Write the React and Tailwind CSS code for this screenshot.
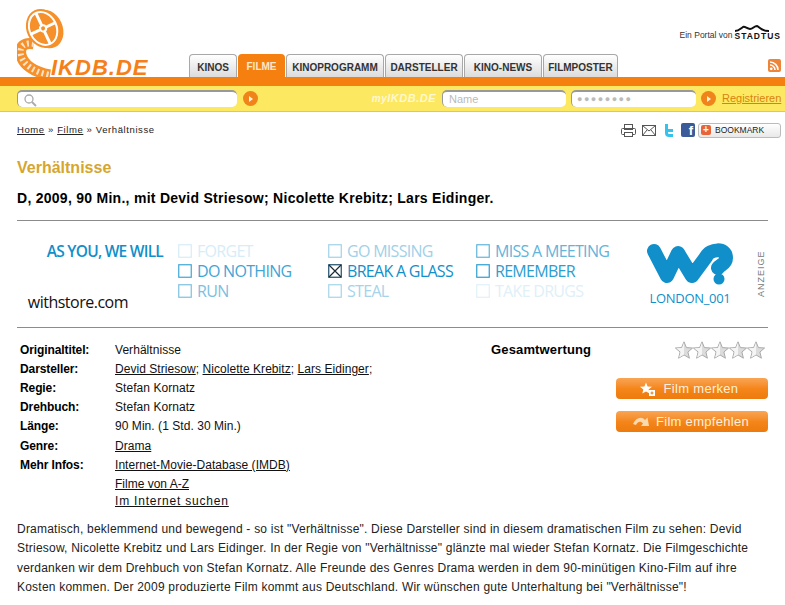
function Logo() {
  return (
    <svg width="64" height="76" viewBox="0 0 64 76" className="shrink-0">
      <path d="M17 43 C8 41 2 45 4 54 C6 63 16 71 33 74" fill="none" stroke="#f5902a" strokeWidth="11" />
      <path d="M17 43 C8 41 2 45 4 54 C6 63 16 71 33 74" fill="none" stroke="#fff" strokeWidth="6" strokeDasharray="2 3" opacity="0.75" />
      <g transform="translate(27 27) rotate(-25)">
        <ellipse cx="2" cy="2" rx="16" ry="20" fill="#f5902a" />
        <ellipse cx="-1" cy="0" rx="15.5" ry="19" fill="#fff" stroke="#f5902a" strokeWidth="2" />
        <ellipse cx="-1" cy="0" rx="12.5" ry="16" fill="#f5902a" />
        <path d="M-1 -17 L-1 17 M-15 0 L13 0" stroke="#fff" strokeWidth="3" />
        <circle cx="-1" cy="0" r="4" fill="#fff" />
        <circle cx="-1" cy="0" r="2" fill="#f5902a" />
      </g>
    </svg>
  )
}

function Tab({ label, w, active }) {
  if (active) {
    return (
      <div className={`${w} h-[23px] bg-[#f57f0f] rounded-t-[4px] text-[#fde9c8] text-[10px] font-bold flex items-center justify-center pt-px`}>
        {label}
      </div>
    )
  }
  return (
    <div className={`${w} h-[23px] border border-b-0 border-[#a8a8a8] bg-gradient-to-b from-white to-[#dcdcdc] rounded-t-[4px] text-[#333] text-[10px] font-bold flex items-center justify-center pt-[3px]`}>
      {label}
    </div>
  )
}

function GoButton() {
  return (
    <div className="w-[15px] h-[15px] rounded-full bg-[#f0831a] flex items-center justify-center shrink-0">
      <div className="w-0 h-0 border-y-[3.5px] border-y-transparent border-l-[4px] border-l-[#fff3d8] ml-[1px]" />
    </div>
  )
}

function Field({ w, children }) {
  return (
    <div className={`${w} h-[17px] bg-white rounded-[5px] border-t-2 border-l border-[#999] border-b-0 border-r-0 flex items-center pl-[5px] shrink-0`}>
      {children}
    </div>
  )
}

function Check({ checked, color }) {
  return (
    <svg width="14" height="14" viewBox="0 0 14 14" className="shrink-0">
      <rect x="0.75" y="0.75" width="12.5" height="12.5" fill="none" stroke={checked ? '#1c4a66' : color} strokeWidth="1.2" />
      {checked && <path d="M1 1 L13 13 M13 1 L1 13" stroke="#1c2a33" strokeWidth="1.2" />}
    </svg>
  )
}

function AdRow({ label, color, checked }) {
  return (
    <div className="h-[20px] flex items-center gap-[5px] text-[16px] tracking-[-0.7px] whitespace-nowrap font-['Open_Sans',sans-serif]" style={{ color }}>
      <Check color={color} checked={checked} />
      {label}
    </div>
  )
}

function Ad() {
  return (
    <div className="h-[106px] flex">
      <div className="w-[161px] shrink-0 flex flex-col items-end pt-[20px]">
        <div className="text-[#118fca] text-[15.5px] tracking-[-0.75px] font-semibold leading-[20px] font-['Open_Sans',sans-serif] mr-[15px] whitespace-nowrap">AS YOU, WE WILL</div>
        <div className="text-[#111] text-[16px] tracking-[-0.5px] leading-[20px] mt-[31px] mr-[50px] font-['Open_Sans',sans-serif] whitespace-nowrap">withstore.com</div>
      </div>
      <div className="w-[150px] shrink-0 pt-[20px]">
        <AdRow label="FORGET" color="#d6edf7" />
        <AdRow label="DO NOTHING" color="#3ea6d6" />
        <AdRow label="RUN" color="#7cc0e0" />
      </div>
      <div className="w-[147px] shrink-0 pt-[20px]">
        <AdRow label="GO MISSING" color="#9fd1e8" />
        <AdRow label="BREAK A GLASS" color="#118fca" checked />
        <AdRow label="STEAL" color="#a5d4ea" />
      </div>
      <div className="w-[171px] shrink-0 pt-[20px] pl-px">
        <AdRow label="MISS A MEETING" color="#62b4da" />
        <AdRow label="REMEMBER" color="#2b9dd0" />
        <AdRow label="TAKE DRUGS" color="#e0f0f8" />
      </div>
      <div className="w-[88px] shrink-0 flex flex-col items-center pt-[22px]">
        <svg width="88" height="42" viewBox="0 0 88 42">
          <path d="M8 8 L21 33 L32 10 L46 33 L60 14 C64 6 80 4 80 15 C80 21 74 22 72 25" fill="none" stroke="#118fca" strokeWidth="14" strokeLinecap="round" strokeLinejoin="round" />
          <circle cx="73" cy="36" r="5.5" fill="#118fca" />
        </svg>
        <div className="text-[#118fca] text-[13px] font-medium tracking-[-0.3px] mt-[4px] whitespace-nowrap font-['Open_Sans',sans-serif]">LONDON_001</div>
      </div>
      <div className="flex-1 flex items-center justify-end">
        <div className="text-[#777] text-[9px] tracking-[1px] -rotate-90 w-[12px] flex justify-center">ANZEIGE</div>
      </div>
    </div>
  )
}

function Star() {
  return (
    <svg width="18" height="18" viewBox="0 0 18 18">
      <path d="M9 0.8 L11.4 6.6 L17.6 7 L12.9 11 L14.4 17.2 L9 13.9 L3.6 17.2 L5.1 11 L0.4 7 L6.6 6.6 Z" fill="#dcdcdc" stroke="#aaa" strokeWidth="1" />
      <path d="M9 1.5 L9 13.6 L4.2 16.4 L5.6 10.8 L1.4 7.3 L7 6.9 Z" fill="#f5f5f5" />
    </svg>
  )
}

function OrangeButton({ label, icon, spacing }) {
  return (
    <div className={`w-[152px] h-[21px] rounded-[4px] bg-gradient-to-b from-[#f9a552] via-[#f5861a] to-[#ed7a0c] text-[#fdf0dc] text-[13px] tracking-[0.3px] flex items-center justify-center ${spacing}`}>
      {icon}
      <span>{label}</span>
    </div>
  )
}

const rows = [
  ['Originaltitel:', <span>Verhältnisse</span>],
  ['Darsteller:', <span><u>Devid Striesow</u>; <u>Nicolette Krebitz</u>; <u>Lars Eidinger</u>;</span>],
  ['Regie:', <span>Stefan Kornatz</span>],
  ['Drehbuch:', <span>Stefan Kornatz</span>],
  ['Länge:', <span>90 Min. (1 Std. 30 Min.)</span>],
  ['Genre:', <u>Drama</u>],
  ['Mehr Infos:', <u>Internet-Movie-Database (IMDB)</u>],
]

export default function App() {
  return (
    <div className="w-[785px] h-[605px] overflow-hidden bg-white font-['Liberation_Sans',Arial,sans-serif] text-black">
      {/* Header */}
      <div className="h-[77px] flex items-end">
        <div className="w-[189px] shrink-0 pl-[17px] flex items-end relative h-full">
          <Logo />
          <div className="absolute left-[51px] bottom-[-3px] text-[#f5801a] text-[22px] font-bold italic tracking-[1px] leading-[24px]">IKDB.DE</div>
        </div>
        <div className="flex gap-px">
          <Tab label="KINOS" w="w-[48px]" />
          <Tab label="FILME" w="w-[47px]" active />
          <Tab label="KINOPROGRAMM" w="w-[98px]" />
          <Tab label="DARSTELLER" w="w-[78px]" />
          <Tab label="KINO-NEWS" w="w-[78px]" />
          <Tab label="FILMPOSTER" w="w-[75px]" />
        </div>
        <div className="flex-1 h-full flex flex-col items-end justify-between pr-[4px] pt-[25px] pb-[5px]">
          <div className="flex items-end gap-[2px]">
            <span className="text-[8.5px] text-[#333] leading-[10px]">Ein Portal von</span>
            <div className="flex flex-col items-start">
              <svg width="36" height="7" viewBox="0 0 36 7">
                <path d="M1 6 C5 6 6 4 9 2 C11 1 13 4 16 4 C19 4 20 1 23 1 C26 2 27 6 35 6" fill="none" stroke="#111" strokeWidth="2" />
              </svg>
              <span className="text-[8.5px] font-bold tracking-[1px] leading-[8px] text-[#111]">STADTUS</span>
            </div>
          </div>
          <svg width="13" height="13" viewBox="0 0 13 13">
            <rect width="13" height="13" rx="2" fill="#ee8438" />
            <circle cx="3.2" cy="9.8" r="1.4" fill="#fff" />
            <path d="M2 6 A5 5 0 0 1 7 11 M2 3 A8 8 0 0 1 10 11" fill="none" stroke="#fff" strokeWidth="1.6" />
          </svg>
        </div>
      </div>

      {/* Orange stripe and login bar */}
      <div className="h-[9px] bg-[#f57f0f]" />
      <div className="h-[26px] bg-[#fde961] border-b border-[#e8c93a] flex items-center pl-[17px] text-[12px]">
        <Field w="w-[220px]">
          <svg width="14" height="14" viewBox="0 0 14 14">
            <circle cx="6" cy="6" r="4" fill="none" stroke="#aaa" strokeWidth="1.3" />
            <path d="M9 9 L13 13" stroke="#aaa" strokeWidth="1.8" />
          </svg>
        </Field>
        <div className="ml-[6px]"><GoButton /></div>
        <div className="w-[178px] text-right text-[11px] font-bold italic text-[#fff8d0] tracking-[0.5px] mr-[6px] whitespace-nowrap">
          <span className="text-[10px]">my</span>IKDB.DE
        </div>
        <Field w="w-[124px]"><span className="text-[#bbb] text-[11px] leading-none pl-px">Name</span></Field>
        <div className="w-[5px]" />
        <Field w="w-[125px]"><span className="text-[#bbb] text-[9px] leading-none tracking-[1.5px]">●●●●●●●●</span></Field>
        <div className="ml-[5px]"><GoButton /></div>
        <u className="ml-[6px] text-[11px] text-[#d9820f]">Registrieren</u>
      </div>

      {/* Content */}
      <div className="px-[17px]">
        <div className="h-[37px] flex items-center justify-between">
          <div className="text-[9.5px] tracking-[0.6px] text-[#222]"><u>Home</u> » <u>Filme</u> » Verhältnisse</div>
          <div className="flex items-center gap-[6px] -mr-[13px] pb-[1px]">
            <svg width="15" height="13" viewBox="0 0 15 13" fill="none" stroke="#555">
              <rect x="3.5" y="0.5" width="8" height="5" /><rect x="0.5" y="4.5" width="14" height="6" rx="1" /><rect x="3.5" y="8.5" width="8" height="4" fill="#fff" />
            </svg>
            <svg width="14" height="11" viewBox="0 0 14 11" fill="none" stroke="#555">
              <rect x="0.5" y="0.5" width="13" height="10" /><path d="M0.5 0.5 L7 6 L13.5 0.5 M0.5 10.5 L5 5 M13.5 10.5 L9 5" />
            </svg>
            <svg width="11" height="15" viewBox="0 0 11 15" className="mx-[1px]">
              <path d="M2 1 L2 10 C2 13 4 14 6 14 L10 14 L10 11 L6 11 C5 11 5 10 5 9 L10 9 L10 6 L5 6 L5 1 Z" fill="#35c3ee" />
            </svg>
            <div className="w-[14px] h-[14px] bg-[#3b5a9a] rounded-[2px] flex justify-end pr-[2px] text-white text-[13px] font-bold leading-[15px]">f</div>
            <div className="w-[83px] h-[15px] -ml-[3px] rounded-[3px] border border-[#bbb] bg-gradient-to-b from-white to-[#e8e8e8] flex items-center pl-[2px] gap-[4px]">
              <div className="w-[10px] h-[10px] rounded-[2px] bg-[#e8623a] text-white text-[10px] font-bold leading-[10px] text-center">+</div>
              <span className="text-[8.5px] text-[#222]">BOOKMARK</span>
            </div>
          </div>
        </div>

        <h1 className="text-[16px] font-bold leading-[18px] text-[#d6a62e] mt-[10px]">Verhältnisse</h1>
        <div className="text-[14px] font-bold tracking-[0.27px] leading-[16px] mt-[13px] whitespace-nowrap">D, 2009, 90 Min., mit Devid Striesow; Nicolette Krebitz; Lars Eidinger.</div>
        <div className="h-px bg-[#8c8c8c] mt-[14px]" />
        <Ad />
        <div className="h-px bg-[#8c8c8c]" />

        {/* Details */}
        <div className="flex pt-[12px]">
          <div className="w-[474px] pl-[3px] text-[12px] shrink-0">
            {rows.map(([label, value]) => (
              <div key={label} className="flex h-[19.2px] items-center">
                <div className="w-[95px] font-bold tracking-[-0.1px]">{label}</div>
                <div className="text-[#111] tracking-[0.05px]">{value}</div>
              </div>
            ))}
            <div className="pl-[95px] h-[19px] flex items-center text-[#111]"><u>Filme von A-Z</u></div>
            <div className="pl-[95px] h-[15px] flex items-center tracking-[0.8px] text-[#111]"><u>Im Internet suchen</u></div>
          </div>
          <div className="flex-1">
            <div className="flex justify-between items-center pr-[3px] h-[20px]">
              <span className="text-[13px] font-bold tracking-[0.15px]">Gesamtwertung</span>
              <div className="flex"><Star /><Star /><Star /><Star /><Star /></div>
            </div>
            <div className="flex flex-col items-end gap-[12px] mt-[18px]">
              <OrangeButton label="Film merken" spacing="gap-[9px] pr-[6px]" icon={
                <svg width="15" height="14" viewBox="0 0 15 14">
                  <path d="M6 0.5 L7.6 4.4 L12 4.7 L8.6 7.4 L9.7 11.6 L6 9.4 L2.3 11.6 L3.4 7.4 L0 4.7 L4.4 4.4 Z" fill="#fff" />
                  <rect x="9" y="8" width="6" height="6" fill="#fff" /><path d="M10.5 11 H13.5 M12 9.5 V12.5" stroke="#e07a10" />
                </svg>
              } />
              <OrangeButton label="Film empfehlen" spacing="gap-[6px] pr-[2px]" icon={
                <svg width="17" height="11" viewBox="0 0 17 11">
                  <path d="M0 8 C3 1 9 0 12 4 L14.5 1.5 L16 10 L8 10 L10 7.5 C8 5 5 5 3 9 Z" fill="#fbd9ae" />
                </svg>
              } />
            </div>
          </div>
        </div>

        <p className="text-[12px] leading-[19.3px] tracking-[0.22px] text-[#222] mt-[11.6px] -mr-[3px]">
          Dramatisch, beklemmend und bewegend - so ist "Verhältnisse". Diese Darsteller sind in diesem dramatischen Film zu sehen: Devid Striesow, Nicolette Krebitz und Lars Eidinger. In der Regie von "Verhältnisse" glänzte mal wieder Stefan Kornatz. Die Filmgeschichte verdanken wir dem Drehbuch von Stefan Kornatz. Alle Freunde des Genres Drama werden in dem 90-minütigen Kino-Film auf ihre Kosten kommen. Der 2009 produzierte Film kommt aus Deutschland. Wir wünschen gute Unterhaltung bei "Verhältnisse"!
        </p>
      </div>
    </div>
  )
}
